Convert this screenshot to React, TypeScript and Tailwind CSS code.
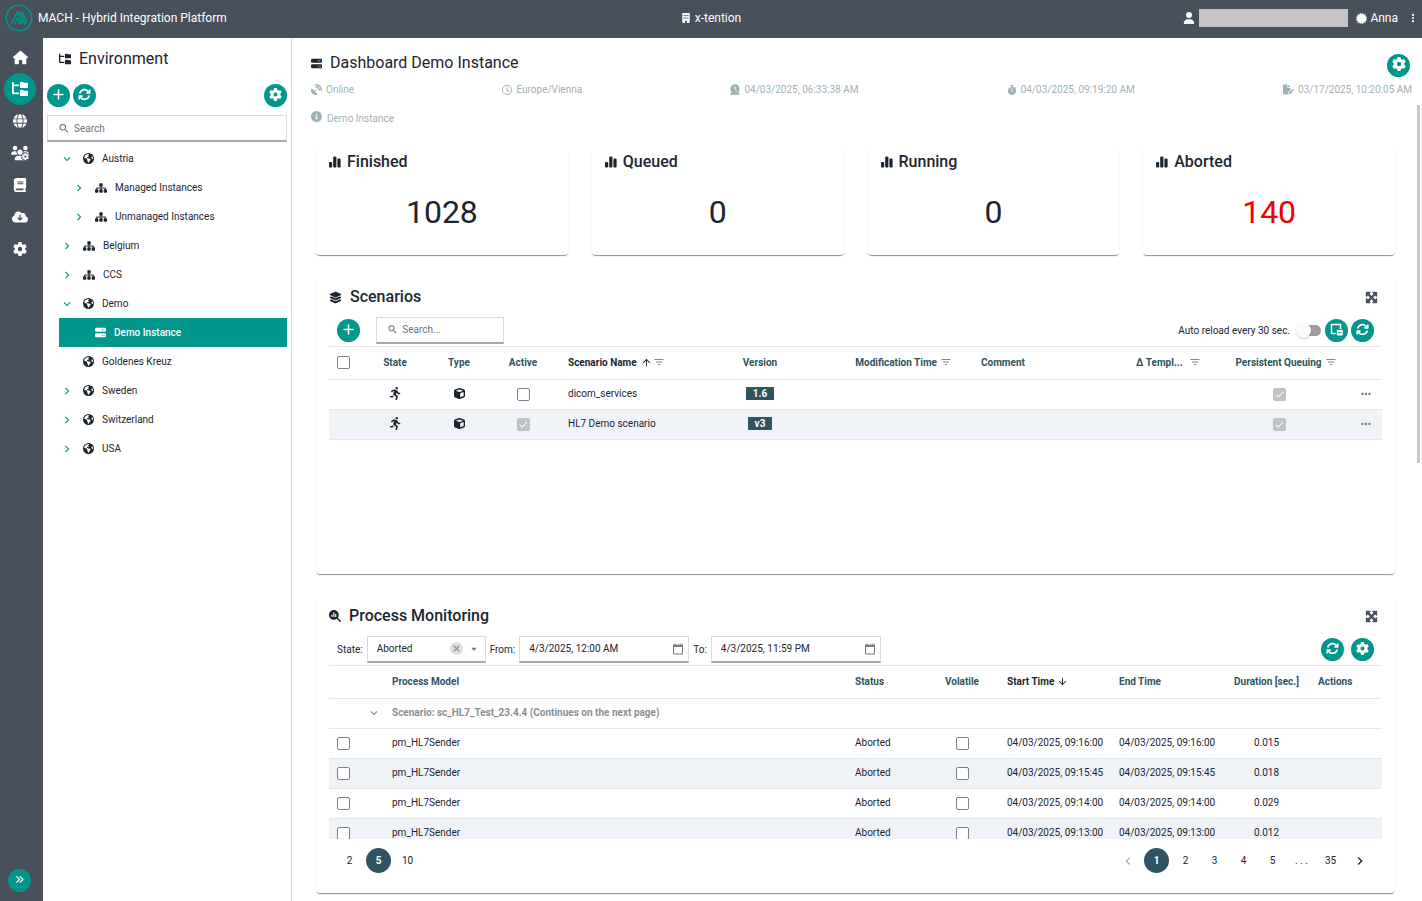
import type { ReactNode } from 'react'
import clsx from 'clsx'
import {
  FaAnglesRight,
  FaArrowsRotate,
  FaBook,
  FaBuilding,
  FaCertificate,
  FaCircleInfo,
  FaCloudArrowDown,
  FaCube,
  FaEarthAmericas,
  FaEllipsisVertical,
  FaFilePen,
  FaFolderTree,
  FaGear,
  FaGlobe,
  FaHouse,
  FaLayerGroup,
  FaMagnifyingGlassChart,
  FaMaximize,
  FaPersonRunning,
  FaPlus,
  FaRegClock,
  FaSatelliteDish,
  FaServer,
  FaSitemap,
  FaStopwatch,
  FaUser,
  FaUsersGear,
} from 'react-icons/fa6'
import {
  MdArrowDownward,
  MdArrowDropDown,
  MdArrowUpward,
  MdCalendarToday,
  MdCheck,
  MdChevronLeft,
  MdChevronRight,
  MdClose,
  MdFilterList,
  MdKeyboardArrowDown,
  MdMoreHoriz,
  MdSearch,
} from 'react-icons/md'

const rail = [
  { label: 'Home', icon: <FaHouse size={15} /> },
  { label: 'Environment', icon: <FaFolderTree size={16} />, active: true },
  { label: 'Network', icon: <FaGlobe size={14} /> },
  { label: 'Users', icon: <FaUsersGear size={18} /> },
  { label: 'Documentation', icon: <FaBook size={14} /> },
  { label: 'Downloads', icon: <FaCloudArrowDown size={16} /> },
  { label: 'Settings', icon: <FaGear size={14} /> },
]

type Node = {
  name: string
  kind: 'world' | 'group' | 'server'
  level?: number
  open?: boolean
  leaf?: boolean
}

const tree: Node[] = [
  { name: 'Austria', kind: 'world', open: true },
  { name: 'Managed Instances', kind: 'group', level: 1 },
  { name: 'Unmanaged Instances', kind: 'group', level: 1 },
  { name: 'Belgium', kind: 'group' },
  { name: 'CCS', kind: 'group' },
  { name: 'Demo', kind: 'world', open: true },
  { name: 'Demo Instance', kind: 'server', level: 1, leaf: true },
  { name: 'Goldenes Kreuz', kind: 'world', leaf: true },
  { name: 'Sweden', kind: 'world' },
  { name: 'Switzerland', kind: 'world' },
  { name: 'USA', kind: 'world' },
]

const counters = [
  { name: 'Finished', value: 1028 },
  { name: 'Queued', value: 0 },
  { name: 'Running', value: 0 },
  { name: 'Aborted', value: 140, alert: true },
]

const scenarios = [
  { name: 'dicom_services', version: '1.6', active: false },
  { name: 'HL7 Demo scenario', version: 'v3', active: true },
]

const processes = [
  { time: '04/03/2025, 09:16:00', duration: '0.015' },
  { time: '04/03/2025, 09:15:45', duration: '0.018' },
  { time: '04/03/2025, 09:14:00', duration: '0.029' },
  { time: '04/03/2025, 09:13:00', duration: '0.012' },
]

const cardClass =
  'rounded bg-white px-[13px] shadow-[0_2px_1px_-1px_rgba(0,0,0,0.3),0_1px_1px_0_rgba(0,0,0,0.16),0_1px_2px_0_rgba(0,0,0,0.06)]'

function Logo() {
  return (
    <svg width="28" height="28" viewBox="0 0 28 28" fill="none" stroke="#00968b" aria-hidden="true">
      <circle cx="14" cy="14" r="12.8" strokeWidth="1.6" />
      <path
        d="M6.500 19 12.200 8.300l4.300 8.700M9.600 19.500l2.800-5.400 3 6 1.800-3M13.500 8.300h1.300l4.600 9.300M17.200 8.300l4.600 9.200-2 2.600-1.600-3"
        strokeWidth="1.600"
        strokeLinecap="round"
        strokeLinejoin="round"
      />
    </svg>
  )
}

function Bars() {
  return (
    <svg width="12" height="12" viewBox="0 0 12 12" fill="currentColor" aria-hidden="true">
      <rect x="0" y="6" width="3.2" height="5.500" rx="1" />
      <rect x="4.200" y="0.500" width="3.200" height="11" rx="1" />
      <rect x="8.400" y="2.500" width="3.200" height="9" rx="1" />
    </svg>
  )
}

function ClockBell() {
  return (
    <svg width="10" height="11" viewBox="0 0 10 11" aria-hidden="true">
      <path
        d="M5 .2a4.6 4.6 0 0 1 4.6 4.6c0 1.600-.6 2.700-1.200 3.500L10 10.800H0l1.600-2.500C.9 7.500.4 6.400.4 4.800A4.600 4.600 0 0 1 5 .2z"
        fill="currentColor"
      />
      <path d="M5 2.500V5.200l1.700 1.300" fill="none" stroke="#fff" strokeWidth="1" />
    </svg>
  )
}

function WindowBadge() {
  return (
    <svg width="13" height="13" viewBox="0 0 13 13" fill="none" aria-hidden="true">
      <path d="M6 10.500H1.500v-9h9V6" stroke="#fff" strokeWidth="1.600" />
      <rect x="6.800" y="6.800" width="6" height="5.700" rx="1" fill="#fff" />
      <path d="M8 9.600h3.600" stroke="#00968b" strokeWidth=".9" />
    </svg>
  )
}

function RoundButton({ label, children }: { label: string; children: ReactNode }) {
  return (
    <button
      aria-label={label}
      className="flex size-[23px] shrink-0 cursor-pointer items-center justify-center rounded-full bg-[#00968b] pb-[2px] text-white"
    >
      {children}
    </button>
  )
}

function Check({ label, checked }: { label: string; checked?: boolean }) {
  return (
    <span className="relative inline-block size-[13px] align-middle">
      <input
        type="checkbox"
        aria-label={label}
        defaultChecked={checked}
        disabled={checked}
        className="block size-[13px] appearance-none rounded-[2px] border border-[#7d8286] bg-white checked:border-[#bfc1c2] checked:bg-[#bfc1c2]"
      />
      {checked && <MdCheck size={11} className="pointer-events-none absolute top-px left-px text-white" />}
    </span>
  )
}

function CardTitle({ icon, children }: { icon: ReactNode; children: ReactNode }) {
  return (
    <div className="flex h-[34px] items-center justify-between">
      <h2 className="flex items-center gap-2 text-base font-medium">
        {icon}
        {children}
      </h2>
      <button aria-label="Maximize" className="mr-1 cursor-pointer text-[#48505c]">
        <FaMaximize size={13} />
      </button>
    </div>
  )
}

function DateField({ id, label, value }: { id: string; label: string; value: string }) {
  return (
    <>
      <label htmlFor={id}>{label}</label>
      <div className="flex h-[27px] w-[170px] items-center border border-b-2 border-[#d9dcde] border-b-[#a3a9ac] pr-1">
        <input id={id} defaultValue={value} className="w-full min-w-0 pl-[9px] outline-none" />
        <button aria-label={`Pick date, ${label}`} className="shrink-0 text-[#7d7d7d]">
          <MdCalendarToday size={12} />
        </button>
      </div>
    </>
  )
}

function Header() {
  return (
    <header className="grid h-[38px] shrink-0 grid-cols-[1fr_auto_1fr] items-center bg-[#48505c] pb-[2px] text-xs text-white">
      <div className="flex items-center gap-[5px] pl-[5px]">
        <Logo />
        <span>MACH - Hybrid Integration Platform</span>
      </div>
      <div className="flex items-center gap-1">
        <FaBuilding size={10} />
        x-tention
      </div>
      <div className="flex items-center justify-end pr-1">
        <FaUser size={12} />
        <span className="ml-1 h-[18px] w-[149px] bg-[#c5c5c5]" />
        <FaCertificate size={11} className="mr-[3px] ml-2" />
        Anna
        <button aria-label="More" className="ml-[10px] cursor-pointer">
          <FaEllipsisVertical size={10} />
        </button>
      </div>
    </header>
  )
}

function Rail() {
  return (
    <nav className="flex w-[43px] shrink-0 flex-col justify-between bg-[#48505c] pt-[3px] pb-[9px] text-white">
      <div className="flex flex-col px-1">
        {rail.map(({ label, icon, active }) => (
          <a
            key={label}
            href="#"
            aria-label={label}
            className={clsx('flex size-8 items-center justify-center rounded-full', active && 'bg-[#00968b]')}
          >
            {icon}
          </a>
        ))}
      </div>
      <div className="pl-2">
        <RoundButton label="Expand menu">
          <FaAnglesRight size={9} />
        </RoundButton>
      </div>
    </nav>
  )
}

function TreeRow({ name, kind, level, open, leaf }: Node) {
  const selected = kind === 'server'

  return (
    <li
      className={clsx(
        'flex h-[29px] items-center pl-[2px]',
        level && 'ml-3',
        selected && 'bg-[#00968b] font-medium text-white'
      )}
    >
      <span className="flex w-[34px] shrink-0 text-[#00968b]">
        {!leaf && (
          <button aria-label={`Toggle ${name}`} className="ml-[11px]">
            {open ? <MdKeyboardArrowDown size={14} /> : <MdChevronRight size={14} />}
          </button>
        )}
      </span>
      {kind === 'world' && <FaEarthAmericas size={11} className="mr-2" />}
      {kind === 'group' && <FaSitemap size={12} className="mr-2" />}
      {selected && <FaServer size={11} className="mr-2" />}
      <a href="#">{name}</a>
    </li>
  )
}

function Environment() {
  return (
    <aside className="w-[249px] shrink-0 border-r border-[#d5d9db] px-1">
      <h1 className="flex h-[42px] items-center gap-2 pl-3 text-base">
        <FaFolderTree size={12} />
        Environment
      </h1>
      <div className="mt-1 flex items-center gap-[3px]">
        <RoundButton label="Add">
          <FaPlus size={13} />
        </RoundButton>
        <RoundButton label="Reload">
          <FaArrowsRotate size={13} />
        </RoundButton>
        <div className="ml-auto">
          <RoundButton label="Environment settings">
            <FaGear size={13} />
          </RoundButton>
        </div>
      </div>
      <label className="mt-2 flex h-[27px] items-center gap-1 border border-b-2 border-[#d9dcde] border-b-[#a3a9ac] pl-[10px] text-[#6b7378]">
        <MdSearch size={13} />
        <input
          type="search"
          placeholder="Search"
          aria-label="Search environment"
          className="w-full outline-none placeholder:text-[#6b7378]"
        />
      </label>
      <ul className="mt-[2px]">
        {tree.map((node) => (
          <TreeRow key={node.name} {...node} />
        ))}
      </ul>
    </aside>
  )
}

function Scenarios() {
  return (
    <section className={clsx(cardClass, 'h-[294px]')}>
      <CardTitle icon={<FaLayerGroup size={13} />}>Scenarios</CardTitle>
      <div className="flex h-8 items-center px-2">
        <RoundButton label="Add scenario">
          <FaPlus size={13} />
        </RoundButton>
        <label className="ml-4 flex h-[27px] w-32 items-center gap-1 border border-b-2 border-[#d9dcde] border-b-[#a3a9ac] pl-[10px] text-[#6b7378]">
          <MdSearch size={13} />
          <input
            type="search"
            placeholder="Search..."
            aria-label="Search scenarios"
            className="w-full min-w-0 outline-none placeholder:text-[#6b7378]"
          />
        </label>
        <label className="ml-auto flex items-center gap-2">
          Auto reload every 30 sec.
          <input
            type="checkbox"
            role="switch"
            className="relative mr-1 h-[11px] w-[23px] appearance-none rounded-full bg-[#9e9e9e] before:absolute before:-top-[2px] before:-left-[2px] before:size-[15px] before:rounded-full before:bg-[#fafafa] before:shadow-[0_1px_2px_rgba(0,0,0,0.2)]"
          />
        </label>
        <div className="flex gap-[3px]">
          <RoundButton label="Detach">
            <WindowBadge />
          </RoundButton>
          <RoundButton label="Reload scenarios">
            <FaArrowsRotate size={13} />
          </RoundButton>
        </div>
      </div>
      <table className="w-full table-fixed border-collapse [&_td]:pb-[2px] [&_th]:pb-[2px]">
        <colgroup>
          <col className="w-[34px]" />
          <col className="w-[64px]" />
          <col className="w-[64px]" />
          <col className="w-[64px]" />
          <col className="w-[173px]" />
          <col className="w-[64px]" />
          <col className="w-[173px]" />
          <col />
          <col className="w-[85px]" />
          <col className="w-[141px]" />
          <col className="w-[32px]" />
        </colgroup>
        <thead className="text-[#2d5460]">
          <tr className="h-[33px] border-y border-[#e3e8ea] text-left">
            <th className="pl-2">
              <Check label="Select all scenarios" />
            </th>
            <th className="text-center">State</th>
            <th className="text-center">Type</th>
            <th className="text-center">Active</th>
            <th className="pl-[13px] text-[#1b2530]">
              <span className="flex items-center gap-1">
                Scenario Name
                <span className="flex items-center gap-px">
                  <MdArrowUpward size={11} />
                  <MdFilterList size={12} className="text-[#7d8a92]" />
                </span>
              </span>
            </th>
            <th className="text-center">Version</th>
            <th className="pr-[13px]">
              <span className="flex items-center justify-end gap-[3px]">
                Modification Time
                <MdFilterList size={12} className="text-[#7d8a92]" />
              </span>
            </th>
            <th className="pl-4">Comment</th>
            <th className="px-2">
              <span className="flex items-center justify-between pl-1">
                Δ Templ...
                <MdFilterList size={12} className="text-[#7d8a92]" />
              </span>
            </th>
            <th className="pl-[13px]">
              <span className="flex items-center justify-center gap-[3px]">
                Persistent Queuing
                <MdFilterList size={12} className="text-[#7d8a92]" />
              </span>
            </th>
            <th />
          </tr>
        </thead>
        <tbody>
          {scenarios.map(({ name, version, active }) => (
            <tr key={name} className="h-[30px] border-b border-[#e3e8ea] text-center even:bg-[#eff3f7]">
              <td />
              <td>
                <FaPersonRunning size={13} className="mx-auto" />
              </td>
              <td>
                <FaCube size={11} className="mx-auto" />
              </td>
              <td>
                <Check label={`${name} active`} checked={active} />
              </td>
              <td className="pl-[13px] text-left">{name}</td>
              <td>
                <span className="inline-block bg-[#2d5460] px-[7px] leading-[13px] font-bold text-white">{version}</span>
              </td>
              <td />
              <td />
              <td />
              <td>
                <Check label={`${name} persistent queuing`} checked />
              </td>
              <td>
                <button aria-label={`${name} actions`} className="block w-full cursor-pointer text-[#6b7378]">
                  <MdMoreHoriz size={14} className="mx-auto" />
                </button>
              </td>
            </tr>
          ))}
        </tbody>
      </table>
    </section>
  )
}

function Monitoring() {
  const pageClass = 'flex size-[25px] cursor-pointer items-center justify-center rounded-full'

  return (
    <section className={clsx(cardClass, 'h-[294px]')}>
      <CardTitle icon={<FaMagnifyingGlassChart size={12} />}>Process Monitoring</CardTitle>
      <div className="flex h-8 items-center gap-1 px-2">
        <label htmlFor="state">State:</label>
        <div className="flex h-[27px] w-[119px] items-center border border-b-2 border-[#d9dcde] border-b-[#a3a9ac]">
          <select id="state" className="min-w-0 flex-1 appearance-none pl-[9px] outline-none">
            <option>Aborted</option>
          </select>
          <button aria-label="Clear state" className="rounded-full bg-[#e0e0e0] p-px text-[#7d7d7d]">
            <MdClose size={11} />
          </button>
          <MdArrowDropDown size={14} className="mx-1 text-[#7d7d7d]" />
        </div>
        <DateField id="from" label="From:" value="4/3/2025, 12:00 AM" />
        <DateField id="to" label="To:" value="4/3/2025, 11:59 PM" />
        <div className="ml-auto flex gap-[7px]">
          <RoundButton label="Reload processes">
            <FaArrowsRotate size={13} />
          </RoundButton>
          <RoundButton label="Monitoring settings">
            <FaGear size={13} />
          </RoundButton>
        </div>
      </div>
      <div className="h-[174px] overflow-hidden">
        <table className="w-full table-fixed border-collapse [&_td]:pb-[2px] [&_th]:pb-[2px]">
          <colgroup>
            <col className="w-[34px]" />
            <col className="w-[21px]" />
            <col />
            <col className="w-[78px]" />
            <col className="w-[74px]" />
            <col className="w-[112px]" />
            <col className="w-[112px]" />
            <col className="w-[87px]" />
            <col className="w-[72px]" />
          </colgroup>
          <thead className="text-[#2d5460]">
            <tr className="h-[33px] border-y border-[#e3e8ea] text-left">
              <th />
              <th />
              <th className="pl-2">Process Model</th>
              <th className="pl-2">Status</th>
              <th className="text-center">Volatile</th>
              <th className="pl-2 text-[#1b2530]">
                <span className="flex items-center gap-[3px]">
                  Start Time
                  <MdArrowDownward size={11} />
                </span>
              </th>
              <th className="pl-2">End Time</th>
              <th className="text-center">Duration [sec.]</th>
              <th className="pl-2">Actions</th>
            </tr>
          </thead>
          <tbody>
            <tr className="h-[30px] border-b border-[#e3e8ea] text-[#8b8f92]">
              <td />
              <td>
                <button aria-label="Collapse scenario" className="mx-auto block">
                  <MdKeyboardArrowDown size={14} />
                </button>
              </td>
              <td colSpan={7} className="pl-2 font-bold">
                Scenario: sc_HL7_Test_23.4.4 (Continues on the next page)
              </td>
            </tr>
            {processes.map(({ time, duration }) => (
              <tr key={time} className="h-[30px] border-b border-[#e3e8ea] odd:bg-[#eff3f7]">
                <td className="pl-2">
                  <Check label={`Select process ${time}`} />
                </td>
                <td />
                <td className="pl-2">pm_HL7Sender</td>
                <td className="pl-2">Aborted</td>
                <td className="text-center">
                  <Check label={`Volatile ${time}`} />
                </td>
                <td className="pl-2 whitespace-nowrap">{time}</td>
                <td className="pl-2 whitespace-nowrap">{time}</td>
                <td className="text-center">{duration}</td>
                <td />
              </tr>
            ))}
          </tbody>
        </table>
      </div>
      <div className="mt-[9px] flex justify-between pr-[10px] pl-2">
        <div className="flex gap-1">
          {[2, 5, 10].map((size) => (
            <button key={size} className={clsx(pageClass, size === 5 && 'bg-[#2d5460] font-bold text-white')}>
              {size}
            </button>
          ))}
        </div>
        <div className="flex gap-1">
          <button aria-label="Previous page" className={clsx(pageClass, 'text-[#b0b4b6]')}>
            <MdChevronLeft size={16} />
          </button>
          {['1', '2', '3', '4', '5', '. . .', '35'].map((page) => (
            <button key={page} className={clsx(pageClass, page === '1' && 'bg-[#2d5460] font-bold text-white')}>
              {page}
            </button>
          ))}
          <button aria-label="Next page" className={pageClass}>
            <MdChevronRight size={16} />
          </button>
        </div>
      </div>
    </section>
  )
}

function Dashboard() {
  return (
    <main className="flex min-w-0 flex-1 flex-col">
      <div className="flex h-[44px] shrink-0 items-center justify-between pt-[6px] pr-3 pl-[19px]">
        <h1 className="flex items-center gap-2 text-base">
          <FaServer size={11} />
          Dashboard Demo Instance
        </h1>
        <div className="pt-1">
          <RoundButton label="Dashboard settings">
            <FaGear size={14} />
          </RoundButton>
        </div>
      </div>
      <div className="flex h-[23px] shrink-0 justify-between pr-[10px] pl-[19px] text-[#9fb1b7]">
        <span className="flex h-[15px] items-center gap-1">
          <FaSatelliteDish size={11} />
          Online
        </span>
        <span className="flex h-[15px] items-center gap-1">
          <FaRegClock size={10} />
          Europe/Vienna
        </span>
        <span className="flex h-[15px] items-center gap-1">
          <ClockBell />
          04/03/2025, 06:33:38 AM
        </span>
        <span className="flex h-[15px] items-center gap-1">
          <FaStopwatch size={10} />
          04/03/2025, 09:19:20 AM
        </span>
        <span className="flex h-[15px] items-center gap-1">
          <FaFilePen size={11} />
          03/17/2025, 10:20:05 AM
        </span>
      </div>
      <div className="flex min-h-0 flex-1">
        <div className="min-w-0 flex-1 overflow-hidden pl-6">
          <div className="-ml-[5px] flex h-[43px] items-start gap-[5px] pt-[6px] text-[#9fb1b7]">
            <FaCircleInfo size={11} />
            <span>Demo Instance</span>
          </div>
          <div className="flex flex-col gap-[25px] pr-[22px]">
            <div className="grid grid-cols-4 gap-6">
              {counters.map(({ name, value, alert }) => (
                <section key={name} className={clsx(cardClass, 'h-[107px]')}>
                  <h2 className="flex h-7 items-center gap-[6px] text-base font-medium">
                    <Bars />
                    {name}
                  </h2>
                  <p className={clsx('mt-4 text-center text-[32px] leading-[40px]', alert && 'text-[#f00000]')}>{value}</p>
                </section>
              ))}
            </div>
            <Scenarios />
            <Monitoring />
          </div>
        </div>
        <div className="w-[5px] shrink-0" aria-hidden="true">
          <div className="h-[45%] w-[3px] bg-[#c4c7c9]" />
        </div>
      </div>
    </main>
  )
}

export default function App() {
  return (
    <div className="flex h-screen flex-col overflow-hidden bg-white font-[Roboto,sans-serif] text-[10px] leading-[15px] text-[#1b2530]">
      <Header />
      <div className="flex min-h-0 flex-1">
        <Rail />
        <Environment />
        <Dashboard />
      </div>
    </div>
  )
}
